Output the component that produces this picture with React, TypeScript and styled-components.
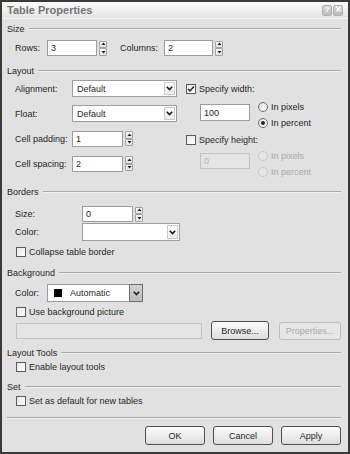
import React from "react";
import styled, { createGlobalStyle } from "styled-components";

const GlobalStyle = createGlobalStyle`
  html, body { margin: 0; padding: 0; background: #ffffff; }
  body { font-family: "Liberation Sans", Arial, sans-serif; font-size: 9px; color: #1f1f1f; }
  * { box-sizing: border-box; }
`;

const Dialog = styled.div`
  width: 350px;
  height: 454px;
  border: 2px solid #3a3a3a;
  background: #e1e1e1;
  display: flex;
  flex-direction: column;
`;

const TitleBar = styled.div`
  height: 17px;
  flex: none;
  display: flex;
  align-items: center;
  padding: 0 5px 0 5px;
  background: linear-gradient(#fbfbfb, #ededed 60%, #e4e4e4);
  border-bottom: 1px solid #f4f4f4;
`;

const Title = styled.div`
  flex: 1;
  font-size: 11px;
  font-weight: bold;
  color: #747474;
`;

const TitleButtons = styled.div`
  display: flex;
  gap: 1px;
`;

const TitleButton = styled.div`
  width: 10px;
  height: 11px;
  background: linear-gradient(#d6d6d6, #bcbcbc);
  border: 1px solid #b0b0b0;
  border-radius: 2px;
  color: #ffffff;
  font-size: 8px;
  font-weight: bold;
  display: flex;
  align-items: center;
  justify-content: center;
  line-height: 1;
`;

const Body = styled.div`
  flex: 1;
  display: flex;
  flex-direction: column;
  padding: 0 7px 0 5px;
`;

const SectionHeader = styled.div<{ $mt: number }>`
  display: flex;
  align-items: center;
  height: 12px;
  margin-top: ${(p) => p.$mt}px;
  gap: 4px;
  &::after {
    content: "";
    flex: 1;
    border-top: 1px solid #a8a8a8;
    border-bottom: 1px solid #f2f2f2;
  }
`;

const Row = styled.div<{ $mt?: number; $h: number; $pl?: number }>`
  display: flex;
  align-items: center;
  height: ${(p) => p.$h}px;
  margin-top: ${(p) => p.$mt ?? 0}px;
  padding-left: ${(p) => p.$pl ?? 8}px;
  flex: none;
`;

const Label = styled.span<{ $w?: number; $ml?: number; $disabled?: boolean }>`
  width: ${(p) => (p.$w ? `${p.$w}px` : "auto")};
  margin-left: ${(p) => p.$ml ?? 0}px;
  flex: none;
  white-space: nowrap;
  color: ${(p) => (p.$disabled ? "#a9a9a9" : "#1f1f1f")};
`;

const TextBox = styled.div<{ $w: number; $h?: number; $disabled?: boolean; $mt?: number }>`
  width: ${(p) => p.$w}px;
  height: ${(p) => p.$h ?? 16}px;
  margin-top: ${(p) => p.$mt ?? 0}px;
  flex: none;
  border: 1px solid ${(p) => (p.$disabled ? "#c2c2c2" : "#9d9d9d")};
  background: ${(p) => (p.$disabled ? "#e4e4e4" : "#ffffff")};
  color: ${(p) => (p.$disabled ? "#b3b3b3" : "#1f1f1f")};
  display: flex;
  align-items: center;
  padding-left: 3px;
`;

const SpinWrap = styled.div`
  display: flex;
  flex-direction: column;
  width: 8px;
  height: 15px;
  margin-left: 2px;
  flex: none;
`;

const SpinHalf = styled.div`
  flex: 1;
  border: 1px solid #a2a2a2;
  background: linear-gradient(#fbfbfb, #e3e3e3);
  display: flex;
  align-items: center;
  justify-content: center;
  border-radius: 1px;
`;

const Spinner = () => (
  <SpinWrap>
    <SpinHalf>
      <svg width="5" height="4" viewBox="0 0 5 4">
        <path d="M2.5 0.5 L4.6 3 L0.4 3 Z" fill="#222" />
      </svg>
    </SpinHalf>
    <SpinHalf>
      <svg width="5" height="4" viewBox="0 0 5 4">
        <path d="M0.4 1 L4.6 1 L2.5 3.5 Z" fill="#222" />
      </svg>
    </SpinHalf>
  </SpinWrap>
);

const SelectBox = styled.div<{ $w: number; $h?: number }>`
  width: ${(p) => p.$w}px;
  height: ${(p) => p.$h ?? 17}px;
  flex: none;
  border: 1px solid #9d9d9d;
  background: #ffffff;
  display: flex;
  align-items: stretch;
`;

const SelectText = styled.div`
  flex: 1;
  display: flex;
  align-items: center;
  padding-left: 4px;
  gap: 8px;
`;

const SelectArrow = styled.div<{ $pressed?: boolean }>`
  width: ${(p) => (p.$pressed ? 14 : 11)}px;
  flex: none;
  display: flex;
  align-items: center;
  justify-content: center;
  background: ${(p) => (p.$pressed ? "linear-gradient(#d2d2d2, #bcbcbc)" : "linear-gradient(#ffffff, #ececec)")};
  border: 1px solid ${(p) => (p.$pressed ? "#6d6d6d" : "#c9c9c9")};
  margin: ${(p) => (p.$pressed ? "-1px -1px -1px 0" : "1px")};
`;

const Swatch = styled.span`
  width: 8px;
  height: 8px;
  background: #000;
  margin-left: 2px;
  flex: none;
`;

const Chevron = () => (
  <svg width="7" height="5" viewBox="0 0 7 5">
    <path d="M0.8 0.8 L3.5 3.6 L6.2 0.8" fill="none" stroke="#1c1c1c" strokeWidth="1.6" />
  </svg>
);

const Select = ({ w, h, text, pressed, swatch }: { w: number; h?: number; text: string; pressed?: boolean; swatch?: boolean }) => (
  <SelectBox $w={w} $h={h}>
    <SelectText>
      {swatch && <Swatch />}
      <span>{text}</span>
    </SelectText>
    <SelectArrow $pressed={pressed}>
      <Chevron />
    </SelectArrow>
  </SelectBox>
);

const CheckBoxBox = styled.span`
  width: 10px;
  height: 10px;
  flex: none;
  border: 1px solid #5a5a5a;
  background: linear-gradient(135deg, #e6e6e6, #ffffff);
  display: flex;
  align-items: center;
  justify-content: center;
`;

const CheckLabel = styled.span`
  margin-left: 3px;
  white-space: nowrap;
`;

const Check = ({ label, checked }: { label: string; checked?: boolean }) => (
  <>
    <CheckBoxBox>
      {checked && (
        <svg width="8" height="8" viewBox="0 0 8 8">
          <path d="M1 4 L3 6 L7 1.5" fill="none" stroke="#222" strokeWidth="1.5" />
        </svg>
      )}
    </CheckBoxBox>
    <CheckLabel>{label}</CheckLabel>
  </>
);

const RadioGroup = styled.div<{ $ml: number; $mt?: number; $rh: number }>`
  display: flex;
  flex-direction: column;
  margin-left: ${(p) => p.$ml}px;
  margin-top: ${(p) => p.$mt ?? 0}px;
  & > div {
    height: ${(p) => p.$rh}px;
  }
`;

const RadioRow = styled.div`
  display: flex;
  align-items: center;
`;

const RadioCircle = styled.span<{ $disabled?: boolean }>`
  width: 10px;
  height: 10px;
  border-radius: 50%;
  border: 1px solid ${(p) => (p.$disabled ? "#c8c8c8" : "#6a6a6a")};
  background: ${(p) => (p.$disabled ? "#e6e6e6" : "linear-gradient(135deg, #e2e2e2, #ffffff)")};
  display: flex;
  align-items: center;
  justify-content: center;
  flex: none;
`;

const RadioDot = styled.span`
  width: 4px;
  height: 4px;
  border-radius: 50%;
  background: #222;
`;

const Radio = ({ label, selected, disabled }: { label: string; selected?: boolean; disabled?: boolean }) => (
  <RadioRow>
    <RadioCircle $disabled={disabled}>{selected && <RadioDot />}</RadioCircle>
    <Label $ml={3} $disabled={disabled}>
      {label}
    </Label>
  </RadioRow>
);

const LayoutGrid = styled.div`
  display: grid;
  grid-template-columns: 179px 1fr;
  margin-top: 3px;
`;

const LeftCol = styled.div`
  display: flex;
  flex-direction: column;
  gap: 8px;
`;

const RightCol = styled.div`
  display: flex;
  flex-direction: column;
`;

const Block = styled.div<{ $h: number; $mt?: number; $pl?: number }>`
  display: flex;
  align-items: flex-start;
  height: ${(p) => p.$h}px;
  margin-top: ${(p) => p.$mt ?? 0}px;
  padding-left: ${(p) => p.$pl ?? 0}px;
`;

const Button = styled.div<{ $w: number; $ml?: number; $disabled?: boolean }>`
  width: ${(p) => p.$w}px;
  height: ${(p) => p.$disabled ? 18 : 19}px;
  margin-left: ${(p) => p.$ml ?? 0}px;
  flex: none;
  border: 1px solid ${(p) => (p.$disabled ? "#bdbdbd" : "#4e4e4e")};
  border-radius: 3px;
  background: ${(p) => (p.$disabled ? "#e6e6e6" : "linear-gradient(#fbfbfb, #ededed 50%, #dddddd)")};
  color: ${(p) => (p.$disabled ? "#a8a8a8" : "#1f1f1f")};
  display: flex;
  align-items: center;
  justify-content: center;
`;

const Separator = styled.div`
  margin-top: 10px;
  border-top: 1px solid #a8a8a8;
  border-bottom: 1px solid #f2f2f2;
`;

const ButtonRow = styled.div`
  display: flex;
  justify-content: flex-end;
  gap: 8px;
  margin-top: 7px;
`;

export default function App() {
  return (
    <>
      <GlobalStyle />
      <Dialog>
        <TitleBar>
          <Title>Table Properties</Title>
          <TitleButtons>
            <TitleButton>?</TitleButton>
            <TitleButton>✕</TitleButton>
          </TitleButtons>
        </TitleBar>
        <Body>
          <SectionHeader $mt={4}>Size</SectionHeader>
          <Row $mt={5} $h={16}>
            <Label $w={32}>Rows:</Label>
            <TextBox $w={50}>3</TextBox>
            <Spinner />
            <Label $w={44} $ml={13}>Columns:</Label>
            <TextBox $w={49}>2</TextBox>
            <Spinner />
          </Row>

          <SectionHeader $mt={9}>Layout</SectionHeader>
          <LayoutGrid>
            <LeftCol>
              <Row $h={17}>
                <Label $w={57}>Alignment:</Label>
                <Select w={105} text="Default" />
              </Row>
              <Row $h={17}>
                <Label $w={57}>Float:</Label>
                <Select w={105} text="Default" />
              </Row>
              <Row $h={17}>
                <Label $w={57}>Cell padding:</Label>
                <TextBox $w={51}>1</TextBox>
                <Spinner />
              </Row>
              <Row $h={17}>
                <Label $w={57}>Cell spacing:</Label>
                <TextBox $w={51}>2</TextBox>
                <Spinner />
              </Row>
            </LeftCol>
            <RightCol>
              <Row $h={17} $pl={0}>
                <Check label="Specify width:" checked />
              </Row>
              <Block $h={34} $mt={2} $pl={14}>
                <TextBox $w={50} $h={17} $mt={5}>100</TextBox>
                <RadioGroup $ml={8} $rh={16}>
                  <Radio label="In pixels" />
                  <Radio label="In percent" selected />
                </RadioGroup>
              </Block>
              <Row $h={13} $pl={0}>
                <Check label="Specify height:" />
              </Row>
              <Block $h={34} $pl={14}>
                <TextBox $w={50} $h={16} $mt={7} $disabled>0</TextBox>
                <RadioGroup $ml={8} $mt={2} $rh={16}>
                  <Radio label="In pixels" disabled />
                  <Radio label="In percent" disabled />
                </RadioGroup>
              </Block>
            </RightCol>
          </LayoutGrid>

          <SectionHeader $mt={6}>Borders</SectionHeader>
          <Row $mt={8} $h={16}>
            <Label $w={67}>Size:</Label>
            <TextBox $w={51}>0</TextBox>
            <Spinner />
          </Row>
          <Row $mt={1} $h={18}>
            <Label $w={67}>Color:</Label>
            <Select w={98} h={18} text="" />
          </Row>
          <Row $mt={5} $h={12} $pl={9}>
            <Check label="Collapse table border" />
          </Row>

          <SectionHeader $mt={9}>Background</SectionHeader>
          <Row $mt={5} $h={18}>
            <Label $w={32}>Color:</Label>
            <Select w={96} h={18} text="Automatic" pressed swatch />
          </Row>
          <Row $mt={4} $h={12} $pl={9}>
            <Check label="Use background picture" />
          </Row>
          <Row $mt={3} $h={19} $pl={9}>
            <TextBox $w={186} $h={16} $disabled />
            <Button $w={58} $ml={9}>Browse...</Button>
            <Button $w={62} $ml={10} $disabled>Properties...</Button>
          </Row>

          <SectionHeader $mt={7}>Layout Tools</SectionHeader>
          <Row $mt={2} $h={12} $pl={9}>
            <Check label="Enable layout tools" />
          </Row>

          <SectionHeader $mt={8}>Set</SectionHeader>
          <Row $mt={2} $h={12} $pl={9}>
            <Check label="Set as default for new tables" />
          </Row>

          <Separator />
          <ButtonRow>
            <Button $w={60}>OK</Button>
            <Button $w={60}>Cancel</Button>
            <Button $w={60}>Apply</Button>
          </ButtonRow>
        </Body>
      </Dialog>
    </>
  );
}
